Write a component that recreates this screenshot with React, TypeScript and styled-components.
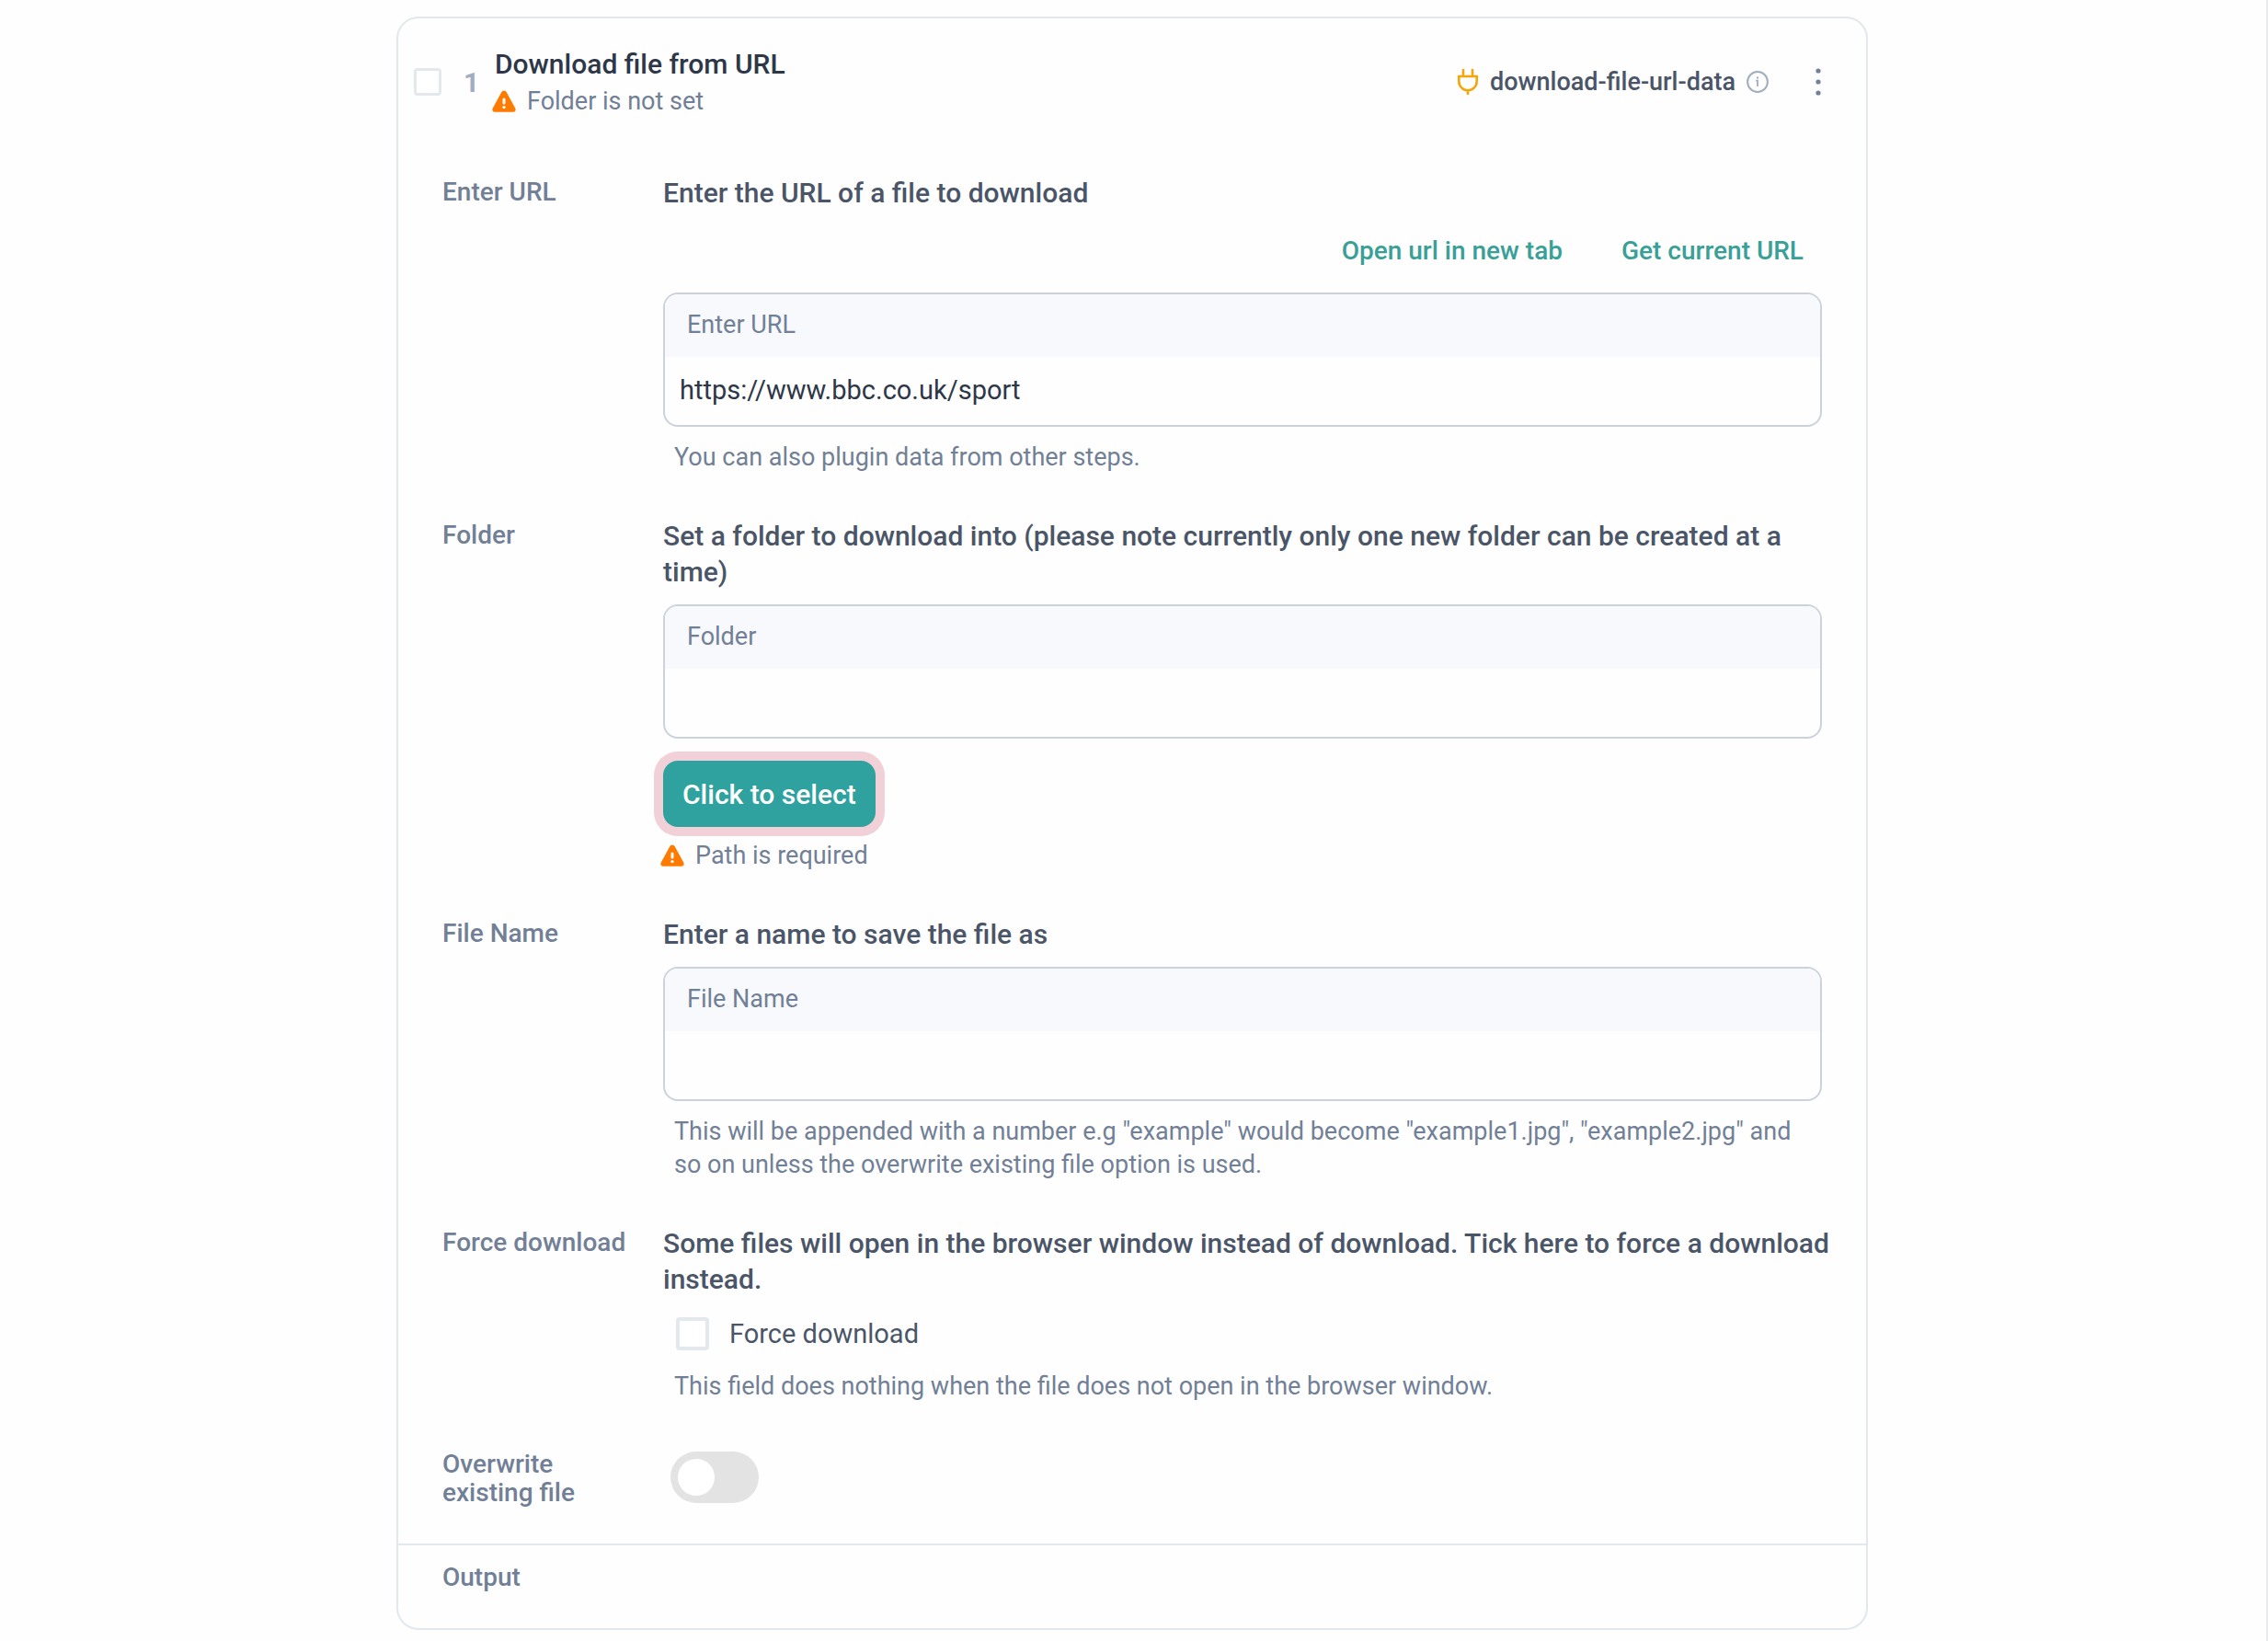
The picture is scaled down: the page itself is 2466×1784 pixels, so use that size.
import React, { useState } from "react";
import styled, { createGlobalStyle } from "styled-components";

const color = {
  page: "#fefefe",
  line: "#e2e8ec",
  field: "#cbd2db",
  title: "#2d3748",
  heading: "#4a5568",
  muted: "#718096",
  faint: "#a0aec0",
  link: "#38a097",
  button: "#2fa2a0",
  ring: "#f2d0d8",
  orange: "#ff7a00",
  amber: "#f5a70a",
};

const GlobalStyle = createGlobalStyle`
  *, *::before, *::after { box-sizing: border-box; }
  body {
    margin: 0;
    background: ${color.page};
    font-family: Roboto, "Noto Sans", sans-serif;
    font-size: 27px;
    color: ${color.heading};
  }
  button, input { font-family: inherit; }
`;

const Page = styled.main`
  min-height: 100vh;
  padding: 18px 2px 12px 0;
  border-right: 2px solid #e8eaec;
`;

const Card = styled.section`
  max-width: 1600px;
  margin: 0 auto;
  border: 2px solid ${color.line};
  border-radius: 24px;
`;

const Header = styled.header`
  display: flex;
  align-items: center;
  padding: 30px 36px 0 17px;
`;

const Tick = styled.input<{ $size: number }>`
  appearance: none;
  flex: none;
  width: ${(p) => p.$size}px;
  height: ${(p) => p.$size}px;
  margin: 0;
  border: ${(p) => (p.$size > 30 ? 4 : 3)}px solid ${color.line};
  border-radius: 4px;
  background: #fff;
  &:checked { background: ${color.button}; }
`;

const StepNumber = styled.span`
  width: 58px;
  padding-left: 24px;
  font-size: 30px;
  font-weight: 700;
  line-height: 39px;
  color: ${color.faint};
`;

const TitleBlock = styled.div`
  flex: 1;
`;

const Title = styled.h2`
  margin: 0 0 3px;
  font-size: 30px;
  font-weight: 500;
  line-height: 39px;
  color: ${color.title};
`;

const Warning = styled.p`
  display: flex;
  align-items: center;
  gap: 12px;
  margin: 0 0 0 -3px;
  line-height: 36px;
  color: ${color.muted};
`;

const FieldWarning = styled(Warning)`
  margin-top: 13px;
`;

const Plugin = styled.div`
  display: flex;
  align-items: center;
  gap: 12px;
  font-size: 27px;
  font-weight: 500;
  line-height: 36px;
`;

const IconButton = styled.button`
  display: flex;
  justify-content: center;
  width: 32px;
  margin-left: 38px;
  padding: 0;
  border: 0;
  background: none;
`;

const Body = styled.div`
  display: grid;
  gap: 48px;
  padding: 62px 48px 40px;
`;

const Row = styled.div`
  display: grid;
  grid-template-columns: 240px minmax(0, 1fr);
`;

const RowLabel = styled.span`
  max-width: 210px;
  padding-top: 3px;
  font-size: 28px;
  font-weight: 500;
  line-height: 31px;
  color: ${color.muted};
`;

const Heading = styled.h3`
  margin: 0 -12px 16px 0;
  font-size: 30px;
  font-weight: 500;
  line-height: 39px;
`;

const Links = styled.div`
  display: flex;
  justify-content: flex-end;
  gap: 24px;
  padding: 10px 0 27px;
`;

const LinkButton = styled.button`
  padding: 0 20px;
  border: 0;
  background: none;
  font-size: 28px;
  font-weight: 500;
  line-height: 36px;
  color: ${color.link};
`;

const Field = styled.div`
  overflow: hidden;
  border: 2px solid ${color.field};
  border-radius: 16px;
`;

const FieldLabel = styled.label`
  display: block;
  height: 68px;
  padding: 0 24px;
  line-height: 66px;
  background: #f7f9fd;
  color: ${color.muted};
`;

const FieldInput = styled.input`
  display: block;
  width: 100%;
  height: 74px;
  padding: 0 16px 2px;
  border: 0;
  outline: 0;
  background: transparent;
  font-size: 29px;
  color: ${color.title};
`;

const Help = styled.p`
  margin: 15px 0 0;
  padding: 0 12px;
  line-height: 36px;
  color: ${color.muted};
`;

const SelectButton = styled.button`
  display: block;
  height: 72px;
  margin-top: 24px;
  padding: 0 21px;
  border: 0;
  border-radius: 16px;
  background: ${color.button};
  box-shadow: 0 0 0 10px ${color.ring};
  font-size: 30px;
  font-weight: 500;
  color: #fff;
`;

const TickRow = styled.label`
  display: flex;
  align-items: center;
  gap: 22px;
  height: 48px;
  padding-left: 14px;
  font-size: 29px;
`;

const Switch = styled.input`
  appearance: none;
  display: flex;
  align-items: center;
  width: 96px;
  height: 56px;
  margin: 5px 8px 0;
  padding: 0 8px;
  border-radius: 28px;
  background: #e3e3e3;
  &::before {
    content: "";
    width: 40px;
    height: 40px;
    border-radius: 50%;
    background: #fff;
  }
  &:checked { justify-content: flex-end; background: ${color.button}; }
`;

const Output = styled.footer`
  padding: 16px 48px 40px;
  border-top: 2px solid ${color.line};
  display: grid;
`;

const WarningIcon = () => (
  <svg width="26" height="24" viewBox="0 0 26 24" aria-hidden="true">
    <path
      d="M10.4 2.1a3 3 0 0 1 5.2 0l9.7 17.7a2.6 2.6 0 0 1-2.3 3.9H3a2.6 2.6 0 0 1-2.3-3.9Z"
      fill={color.orange}
    />
    <path d="M13 10v4" stroke="#fff" strokeWidth="3" strokeLinecap="round" />
    <circle cx="13" cy="18.6" r="1.7" fill="#fff" />
  </svg>
);

const PlugIcon = () => (
  <svg width="24" height="30" viewBox="0 0 24 30" fill="none" stroke={color.amber} strokeWidth="2.6" aria-hidden="true">
    <path d="M7 1v8M17 1v8M1 9h22M2.3 9v5.5a9.7 9.7 0 0 0 19.4 0V9M12 24v5" />
  </svg>
);

const InfoIcon = () => (
  <svg width="24" height="24" viewBox="0 0 24 24" fill="none" stroke={color.faint} aria-hidden="true">
    <circle cx="12" cy="12" r="10.9" strokeWidth="2" />
    <path d="M10.2 10.6H12V17" strokeWidth="1.8" />
    <path d="M12 6.4v2.2" strokeWidth="2" />
  </svg>
);

const DotsIcon = () => (
  <svg width="6" height="30" viewBox="0 0 6 30" fill={color.muted} aria-hidden="true">
    <circle cx="3" cy="3" r="2.6" />
    <circle cx="3" cy="15" r="2.6" />
    <circle cx="3" cy="27" r="2.6" />
  </svg>
);

interface TextFieldProps {
  id: string;
  label: string;
  initial?: string;
}

function TextField({ id, label, initial = "" }: TextFieldProps) {
  const [value, setValue] = useState(initial);
  return (
    <Field>
      <FieldLabel htmlFor={id}>{label}</FieldLabel>
      <FieldInput id={id} type="text" value={value} onChange={(e) => setValue(e.target.value)} />
    </Field>
  );
}

export default function App() {
  return (
    <>
      <GlobalStyle />
      <Page>
        <Card>
          <Header>
            <Tick type="checkbox" $size={30} aria-label="Select step 1" />
            <StepNumber>1</StepNumber>
            <TitleBlock>
              <Title>Download file from URL</Title>
              <Warning>
                <WarningIcon />
                Folder is not set
              </Warning>
            </TitleBlock>
            <Plugin>
              <PlugIcon />
              download-file-url-data
              <InfoIcon />
            </Plugin>
            <IconButton type="button" aria-label="Step options">
              <DotsIcon />
            </IconButton>
          </Header>

          <Body>
            <Row>
              <RowLabel>Enter URL</RowLabel>
              <div>
                <Heading>Enter the URL of a file to download</Heading>
                <Links>
                  <LinkButton type="button">Open url in new tab</LinkButton>
                  <LinkButton type="button">Get current URL</LinkButton>
                </Links>
                <TextField id="url" label="Enter URL" initial="https://www.bbc.co.uk/sport" />
                <Help>You can also plugin data from other steps.</Help>
              </div>
            </Row>

            <Row>
              <RowLabel>Folder</RowLabel>
              <div>
                <Heading>
                  Set a folder to download into (please note currently only one new folder can be created at a time)
                </Heading>
                <TextField id="folder" label="Folder" />
                <SelectButton type="button">Click to select</SelectButton>
                <FieldWarning>
                  <WarningIcon />
                  Path is required
                </FieldWarning>
              </div>
            </Row>

            <Row>
              <RowLabel>File Name</RowLabel>
              <div>
                <Heading>Enter a name to save the file as</Heading>
                <TextField id="file-name" label="File Name" />
                <Help>
                  This will be appended with a number e.g "example" would become "example1.jpg", "example2.jpg" and so
                  on unless the overwrite existing file option is used.
                </Help>
              </div>
            </Row>

            <Row>
              <RowLabel>Force download</RowLabel>
              <div>
                <Heading>
                  Some files will open in the browser window instead of download. Tick here to force a download instead.
                </Heading>
                <TickRow>
                  <Tick type="checkbox" $size={36} />
                  Force download
                </TickRow>
                <Help>This field does nothing when the file does not open in the browser window.</Help>
              </div>
            </Row>

            <Row>
              <RowLabel as="label" htmlFor="overwrite">
                Overwrite existing file
              </RowLabel>
              <Switch id="overwrite" type="checkbox" role="switch" />
            </Row>
          </Body>

          <Output>
            <RowLabel>Output</RowLabel>
          </Output>
        </Card>
      </Page>
    </>
  );
}
